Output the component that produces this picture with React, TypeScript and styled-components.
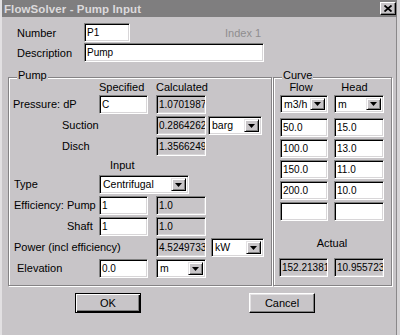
import React from "react";
import styled, { createGlobalStyle } from "styled-components";

const BG = "#c8c5c8";

const Global = createGlobalStyle`
  html, body { margin: 0; padding: 0; background: ${BG}; }
  body { font-family: "Liberation Sans", Arial, sans-serif; font-size: 11px; color: #000; }
  * { box-sizing: border-box; }
`;

const Window = styled.div`
  width: 400px;
  height: 335px;
  background: ${BG};
  border-left: 2px solid #e2e0e2;
  border-right: 3px solid #d6d4d6;
  box-shadow: inset -1px 0 0 #8a888a;
  display: flex;
  flex-direction: column;
  overflow: hidden;
`;

const TitleBar = styled.div`
  height: 17px;
  background: #7f7e7f;
  display: flex;
  align-items: center;
  justify-content: space-between;
  padding: 0 1px 0 2px;
`;

const TitleText = styled.span`
  color: #dcdadc;
  font-weight: bold;
  font-size: 11.5px;
  letter-spacing: 0.1px;
`;

const CloseButton = styled.div`
  width: 16px;
  height: 13px;
  background: ${BG};
  border: 1px solid;
  border-color: #fff #000 #000 #fff;
  box-shadow: inset -1px -1px 0 #808080;
  display: flex;
  align-items: center;
  justify-content: center;
`;

const Body = styled.div`
  padding: 0 0 0 6px;
  display: flex;
  flex-direction: column;
`;

const TopFields = styled.div`
  padding: 6px 0 0 9px;
  display: flex;
  flex-direction: column;
  gap: 1px;
`;

const TopRow = styled.div`
  display: flex;
  align-items: center;
  height: 19px;
`;

const TopLabel = styled.span`
  width: 67px;
`;

const DimText = styled.span<{ $ml: number }>`
  margin-left: ${(p) => p.$ml}px;
  color: #8f8d8f;
`;

const GroupsRow = styled.div`
  margin-top: 15px;
  display: flex;
  gap: 1px;
`;

const GroupBox = styled.div<{ $w: number }>`
  position: relative;
  width: ${(p) => p.$w}px;
  height: 209px;
  border: 1px solid #858385;
  box-shadow: inset 1px 1px 0 #fff, 1px 1px 0 #fff;
`;

const Legend = styled.span`
  position: absolute;
  top: -9px;
  left: 8px;
  line-height: 13px;
  padding: 0 1px;
  background: ${BG};
`;

const PumpGrid = styled.div`
  display: grid;
  grid-template-columns: 86px 57px 52px 56px;
  grid-template-rows: 12px 19px 19px 19px 15px 19px 19px 19px 19px 19px;
  row-gap: 2px;
  padding: 3px 0 0 4px;
  align-items: center;
`;

const CurveGrid = styled.div`
  display: grid;
  grid-template-columns: 48px 50px;
  grid-template-rows: 12px 21px repeat(5, 19px) 33px 19px;
  column-gap: 6px;
  row-gap: 2px;
  padding: 3px 0 0 6px;
`;

const Cell = styled.div<{ $col?: string; $pl?: number; $ml?: number; $align?: string; $center?: boolean; $pr?: number; $pb?: number }>`
  grid-column: ${(p) => p.$col || "auto"};
  padding-left: ${(p) => p.$pl || 0}px;
  padding-right: ${(p) => p.$pr || 0}px;
  padding-bottom: ${(p) => p.$pb || 0}px;
  margin-left: ${(p) => p.$ml || 0}px;
  align-self: ${(p) => p.$align || "center"};
  line-height: 13px;
  white-space: nowrap;
  display: flex;
  justify-content: ${(p) => (p.$center ? "center" : "flex-start")};
`;

const Field = styled.div<{ $w: number; $ro?: boolean; $h?: number; $ml?: number }>`
  width: ${(p) => p.$w}px;
  height: ${(p) => p.$h || 19}px;
  margin-left: ${(p) => p.$ml || 0}px;
  background: ${(p) => (p.$ro ? BG : "#fff")};
  border: 1px solid;
  border-color: #808080 #fff #fff #808080;
  box-shadow: inset 1px 1px 0 #000, inset -1px -1px 0 #d8d6d8;
  padding: 0 1px 0 2px;
  font-size: 10px;
  line-height: 17px;
  white-space: nowrap;
  overflow: hidden;
`;

const Select = styled.div<{ $w: number; $h?: number }>`
  width: ${(p) => p.$w}px;
  height: ${(p) => p.$h || 19}px;
  background: #fff;
  border: 1px solid;
  border-color: #808080 #fff #fff #808080;
  box-shadow: inset 1px 1px 0 #000, inset -1px -1px 0 #d8d6d8;
  padding: 2px 2px 2px 3px;
  display: flex;
  align-items: stretch;
`;

const SelectText = styled.span`
  flex: 1;
  font-size: 10.5px;
  line-height: 13px;
  white-space: nowrap;
  overflow: hidden;
`;

const DropButton = styled.div`
  width: 15px;
  background: ${BG};
  border: 1px solid;
  border-color: #e4e2e4 #000 #000 #e4e2e4;
  box-shadow: inset 1px 1px 0 #fff, inset -1px -1px 0 #808080;
  display: flex;
  align-items: center;
  justify-content: center;
`;

const ButtonRow = styled.div`
  margin-top: 7px;
  padding-left: 67px;
  display: flex;
  gap: 108px;
`;

const Button = styled.div<{ $default?: boolean }>`
  width: 66px;
  height: 20px;
  background: ${BG};
  border: 1px solid;
  border-color: ${(p) => (p.$default ? "#000" : "#fff #000 #000 #fff")};
  box-shadow: ${(p) =>
    p.$default
      ? "inset 1px 1px 0 #fff, inset -1px -1px 0 #000, inset -2px -2px 0 #808080"
      : "inset -1px -1px 0 #808080, inset 1px 1px 0 #e4e2e4"};
  display: flex;
  align-items: center;
  justify-content: center;
`;

const Arrow = () => (
  <svg width="7" height="4" viewBox="0 0 7 4">
    <polygon points="0,0 7,0 3.5,4" fill="#000" />
  </svg>
);

const Drop: React.FC<{ w: number; text: string; h?: number }> = ({ w, text, h }) => (
  <Select $w={w} $h={h}>
    <SelectText>{text}</SelectText>
    <DropButton>
      <Arrow />
    </DropButton>
  </Select>
);

const flows = ["50.0", "100.0", "150.0", "200.0", ""];
const heads = ["15.0", "13.0", "11.0", "10.0", ""];

export default function App() {
  return (
    <>
      <Global />
      <Window>
        <TitleBar>
          <TitleText>FlowSolver - Pump Input</TitleText>
          <CloseButton>
            <svg width="8" height="7" viewBox="0 0 8 7">
              <path d="M0.5 0.5 L7.5 6.5 M7.5 0.5 L0.5 6.5" stroke="#000" strokeWidth="1.8" />
            </svg>
          </CloseButton>
        </TitleBar>
        <Body>
          <TopFields>
            <TopRow>
              <TopLabel>Number</TopLabel>
              <Field $w={46}>P1</Field>
              <DimText $ml={95}>Index 1</DimText>
            </TopRow>
            <TopRow>
              <TopLabel>Description</TopLabel>
              <Field $w={180}>Pump</Field>
            </TopRow>
          </TopFields>
          <GroupsRow>
            <GroupBox $w={264}>
              <Legend>Pump</Legend>
              <PumpGrid>
                <Cell $col="2">Specified</Cell>
                <Cell $col="3">Calculated</Cell>

                <Cell $col="1">Pressure: dP</Cell>
                <Cell $col="2"><Field $w={49}>C</Field></Cell>
                <Cell $col="3"><Field $w={50} $ro>1.0701987</Field></Cell>

                <Cell $col="1" $pl={49}>Suction</Cell>
                <Cell $col="3"><Field $w={50} $ro>0.2864262</Field></Cell>
                <Cell $col="4"><Drop w={54} text="barg" /></Cell>

                <Cell $col="1" $pl={49}>Disch</Cell>
                <Cell $col="3"><Field $w={50} $ro>1.3566249</Field></Cell>

                <Cell $col="2 / 4" $pl={11}>Input</Cell>

                <Cell $col="1" $pl={1}>Type</Cell>
                <Cell $col="2 / 4"><Drop w={90} text="Centrifugal" /></Cell>

                <Cell $col="1" $pl={1}>Efficiency: Pump</Cell>
                <Cell $col="2"><Field $w={49}>1</Field></Cell>
                <Cell $col="3"><Field $w={50} $ro>1.0</Field></Cell>

                <Cell $col="1" $pl={54}>Shaft</Cell>
                <Cell $col="2"><Field $w={49}>1</Field></Cell>
                <Cell $col="3"><Field $w={50} $ro>1.0</Field></Cell>

                <Cell $col="1 / 3" $pl={1}>Power (incl efficiency)</Cell>
                <Cell $col="3"><Field $w={50} $ro>4.5249733</Field></Cell>
                <Cell $col="4" $ml={3}><Drop w={53} text="kW" /></Cell>

                <Cell $col="1" $pl={4}>Elevation</Cell>
                <Cell $col="2"><Field $w={49}>0.0</Field></Cell>
                <Cell $col="3"><Drop w={50} text="m" /></Cell>
              </PumpGrid>
            </GroupBox>
            <GroupBox $w={119}>
              <Legend>Curve</Legend>
              <CurveGrid>
                <Cell $center $pr={6}>Flow</Cell>
                <Cell $center $pr={9}>Head</Cell>
                <Cell $align="start"><Drop w={48} h={18} text="m3/h" /></Cell>
                <Cell $align="start"><Drop w={50} h={18} text="m" /></Cell>
                {flows.map((f, i) => (
                  <React.Fragment key={i}>
                    <Cell><Field $w={48}>{f}</Field></Cell>
                    <Cell><Field $w={50}>{heads[i]}</Field></Cell>
                  </React.Fragment>
                ))}
                <Cell $col="1 / 3" $center $align="end" $pb={6}>Actual</Cell>
                <Cell><Field $w={50} $ro $ml={-1}>152.21381</Field></Cell>
                <Cell><Field $w={50} $ro>10.955723</Field></Cell>
              </CurveGrid>
            </GroupBox>
          </GroupsRow>
          <ButtonRow>
            <Button $default>OK</Button>
            <Button>Cancel</Button>
          </ButtonRow>
        </Body>
      </Window>
    </>
  );
}
